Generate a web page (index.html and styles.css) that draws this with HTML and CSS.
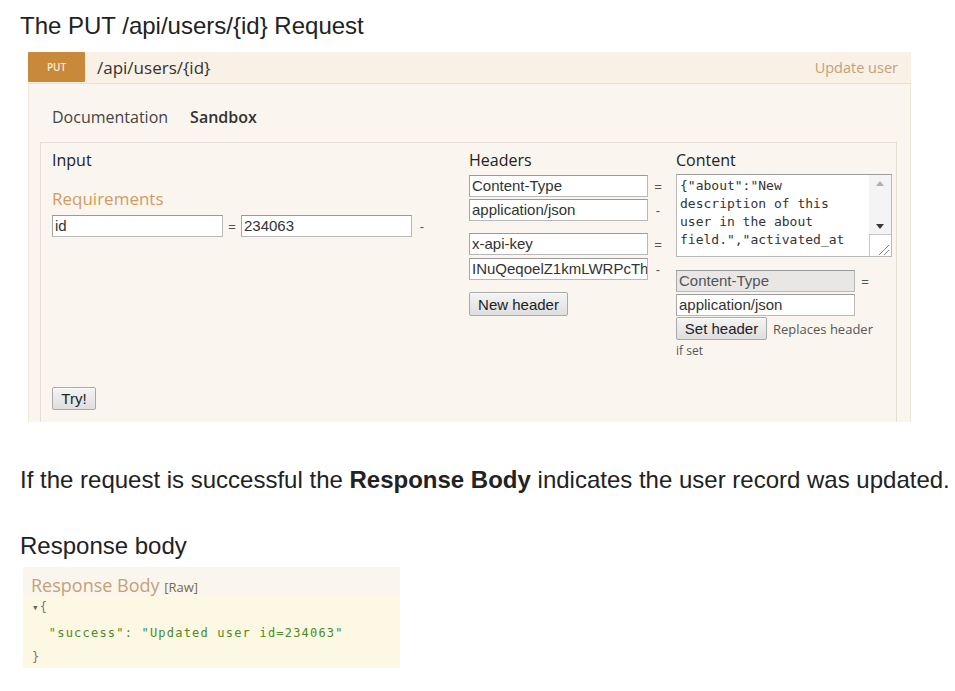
FILE: index.html
```html
<!DOCTYPE html>
<html>
<head>
<meta charset="utf-8">
<link rel="stylesheet" href="styles.css">
</head>
<body>
<div class="page">
  <h1 class="title">The PUT /api/users/{id} Request</h1>
  <div class="panel">
    <div class="panel-head">
      <span class="badge">PUT</span>
      <span class="path">/api/users/{id}</span>
      <span class="summary">Update user</span>
    </div>
    <div class="tabs">
      <span class="tab">Documentation</span>
      <span class="tab active">Sandbox</span>
    </div>
    <div class="sandbox">
      <div class="col col-input">
        <div class="col-title">Input</div>
        <div class="req-title">Requirements</div>
        <div class="field-row">
          <span class="inp w170">id</span>
          <span class="sign">=</span>
          <span class="inp w170">234063</span>
          <span class="sign dash">-</span>
        </div>
        <span class="btn btn-try">Try!</span>
      </div>
      <div class="col col-headers">
        <div class="col-title">Headers</div>
        <div class="hdr-group">
          <div class="field-row"><span class="inp w179">Content-Type</span><span class="sign">=</span></div>
          <div class="field-row"><span class="inp w179">application/json</span><span class="sign">-</span></div>
        </div>
        <div class="hdr-group">
          <div class="field-row"><span class="inp w179">x-api-key</span><span class="sign">=</span></div>
          <div class="field-row"><span class="inp w179 clip">INuQeqoelZ1kmLWRPcTh</span><span class="sign">-</span></div>
        </div>
        <span class="btn btn-new">New header</span>
      </div>
      <div class="col col-content">
        <div class="col-title">Content</div>
        <div class="textarea">
          <div class="ta-text">{"about":"New<br>description of this<br>user in the about<br>field.","activated_at</div>
          <div class="ta-scroll">
            <svg class="arr" width="22" height="16" viewBox="0 0 22 16"><path d="M7 11 L11 6 L15 11 Z" fill="#b0b0b0"/></svg>
            <div class="ta-track"></div>
            <svg class="arr" width="22" height="16" viewBox="0 0 22 16"><path d="M7 6 L15 6 L11 11 Z" fill="#3a3a3a"/></svg>
            <div class="grip"><svg width="22" height="22" viewBox="0 0 22 22"><path d="M19 10 L9 20 M19 15 L14 20" stroke="#8a8a8a" stroke-width="1"/></svg></div>
          </div>
        </div>
        <div class="set-block">
          <div class="field-row"><span class="inp w179 disabled">Content-Type</span><span class="sign">=</span></div>
          <div class="field-row"><span class="inp w179">application/json</span></div>
          <div class="set-line"><span class="btn btn-set">Set header</span><span class="note">Replaces header</span></div>
          <div class="note note-if">if set</div>
        </div>
      </div>
    </div>
  </div>

  <p class="para">If the request is successful the <b>Response Body</b> indicates the user record was updated.</p>

  <p class="sub">Response body</p>

  <div class="resp">
    <div class="resp-title">Response Body <span class="raw">[Raw]</span></div>
    <div class="resp-code"><span class="brace"><span class="tog">&#9662;</span>{</span>
<span class="str">  "success": "Updated user id=234063"</span>
<span class="brace">}</span></div>
  </div>
</div>
</body>
</html>
```
FILE: styles.css
```css
* { box-sizing: border-box; }
html, body { margin: 0; padding: 0; background: #fff; }
body { font-family: "Liberation Sans", Arial, sans-serif; color: #222; }
.page { padding: 12px 0 0 20px; width: 955px; }

.title {
  margin: 0;
  font-weight: normal;
  font-size: 24px;
  line-height: 28px;
  color: #222;
}

.panel {
  margin: 12px 0 0 8px;
  width: 883px;
  background: #faf5ef;
  border: 1px solid #efe6da;
  border-bottom: none;
  height: 370px;
  font-family: "Open Sans", "Noto Sans", sans-serif;
}
.panel-head {
  display: flex;
  align-items: center;
  height: 32px;
  background: #f9f0e6;
  border-bottom: 1px solid #eddfcf;
  margin: -1px -1px 0 -1px;
}
.badge {
  width: 57px;
  height: 30px;
  align-self: flex-start;
  background: #c8893a;
  color: #fbeedd;
  font-size: 10px;
  font-weight: 600;
  display: flex;
  align-items: center;
  justify-content: center;
  border-radius: 1px;
}
.path {
  margin-left: 12px;
  font-size: 17px;
  color: #333;
}
.summary {
  margin-left: auto;
  margin-right: 13px;
  font-size: 14.5px;
  color: #c4a07a;
}

.tabs {
  display: flex;
  gap: 22px;
  padding: 23px 0 0 23px;
  font-size: 16px;
  line-height: 20px;
  color: #444;
}
.tab.active { font-weight: 600; color: #333; }

.sandbox {
  margin: 15px 13px 0 11px;
  border: 1px solid #e6dfd6;
  border-bottom: none;
  height: 280px;
  display: flex;
  padding: 7px 0 0 11px;
}
.col-title {
  font-size: 16px;
  line-height: 20px;
  color: #222;
}
.col-input { width: 417px; display: flex; flex-direction: column; align-items: flex-start; }
.col-headers { width: 207px; }
.col-content { width: 219px; }

.req-title {
  margin-top: 19px;
  font-size: 17px;
  line-height: 20px;
  color: #d29c5f;
}
.field-row { display: flex; align-items: center; }
.inp {
  display: block;
  height: 22px;
  background: #fff;
  border: 1px solid #b9b9b9;
  border-top-color: #9a9a9a;
  border-left-color: #a8a8a8;
  font-family: "Liberation Sans", Arial, sans-serif;
  font-size: 15px;
  line-height: 20px;
  padding: 0 2px;
  color: #333;
  white-space: nowrap;
  overflow: hidden;
}
.inp.disabled { background: #e8e7e5; color: #555; }
.w170 { width: 171px; }
.w179 { width: 179px; }
.sign {
  width: 18px;
  text-align: center;
  font-family: "Liberation Sans", Arial, sans-serif;
  font-size: 13px;
  color: #555;
}
.col-input .field-row { margin-top: 6px; }
.col-input .field-row .sign:first-of-type { width: 14px; }
.col-input .dash { width: 18px; margin-left: 1px; }

.btn {
  display: inline-flex;
  align-items: center;
  justify-content: center;
  height: 23px;
  border: 1px solid #a9a9a9;
  border-radius: 2px;
  background: linear-gradient(#f4f4f4, #dedede);
  font-family: "Liberation Sans", Arial, sans-serif;
  font-size: 15px;
  color: #222;
  box-shadow: inset 0 1px 0 #fff;
}
.btn-try { margin-top: 150px; width: 44px; height: 23px; }
.btn-new { margin-top: 12px; width: 99px; height: 24px; }
.btn-set { width: 91px; height: 23px; }

.hdr-group { margin-top: 5px; display: flex; flex-direction: column; gap: 2px; }
.hdr-group + .hdr-group { margin-top: 12px; gap: 3px; }

.col-headers .sign { width: 20px; }

.textarea {
  margin-top: 4px;
  width: 216px;
  height: 83px;
  background: #fff;
  border: 1px solid #b9b9b9;
  border-top-color: #9c9c9c;
  display: flex;
  overflow: hidden;
}
.ta-text {
  flex: 1;
  padding: 2px 0 0 3px;
  font-family: "DejaVu Sans Mono", monospace;
  font-size: 13px;
  line-height: 18px;
  color: #333;
  white-space: nowrap;
  overflow: hidden;
}
.ta-scroll {
  width: 22px;
  display: flex;
  flex-direction: column;
  background: #f4f4f4;
}
.arr { display: block; }
.ta-track { flex: 1; }
.grip {
  height: 22px;
  background: #fff;
  border-top: 1px solid #c8c8c8;
  border-left: 1px solid #c8c8c8;
}
.grip svg { display: block; }

.set-block { margin-top: 13px; }
.set-block .field-row + .field-row { margin-top: 2px; }
.set-block .sign { width: 20px; }
.set-line { display: flex; align-items: center; margin-top: 1px; }
.note {
  font-family: "Open Sans", "Noto Sans", sans-serif;
  font-size: 13px;
  color: #555;
  margin-left: 6px;
}
.note-if { margin-left: 0; margin-top: 3px; line-height: 16px; font-size: 12px; }

.para {
  margin: 44px 0 0 0;
  font-size: 24px;
  line-height: 28px;
  color: #222;
}
.para b { font-weight: bold; }
.sub {
  margin: 38px 0 0 0;
  font-size: 24px;
  line-height: 28px;
  color: #222;
}

.resp {
  margin: 7px 0 0 3px;
  width: 377px;
  height: 101px;
  background: #faf6ee;
}
.resp-title {
  padding: 7px 0 0 8px;
  height: 28px;
  font-family: "Open Sans", "Noto Sans", sans-serif;
  font-size: 18px;
  line-height: 22px;
  color: #c5a178;
}
.raw { font-size: 13px; color: #7a6c48; }
.resp-code {
  height: 73px;
  background: #fcf8e3;
  padding: 0 0 0 9px;
  font-family: "DejaVu Sans Mono", monospace;
  font-size: 12px;
  line-height: 24.5px;
  white-space: pre;
  letter-spacing: 1.2px;
}
.resp-code .brace:first-child { display: inline-block; margin-top: -6px; }
.brace { color: #777; }
.tog { font-size: 11px; color: #666; }
.str { color: #4a8a2a; }
```
